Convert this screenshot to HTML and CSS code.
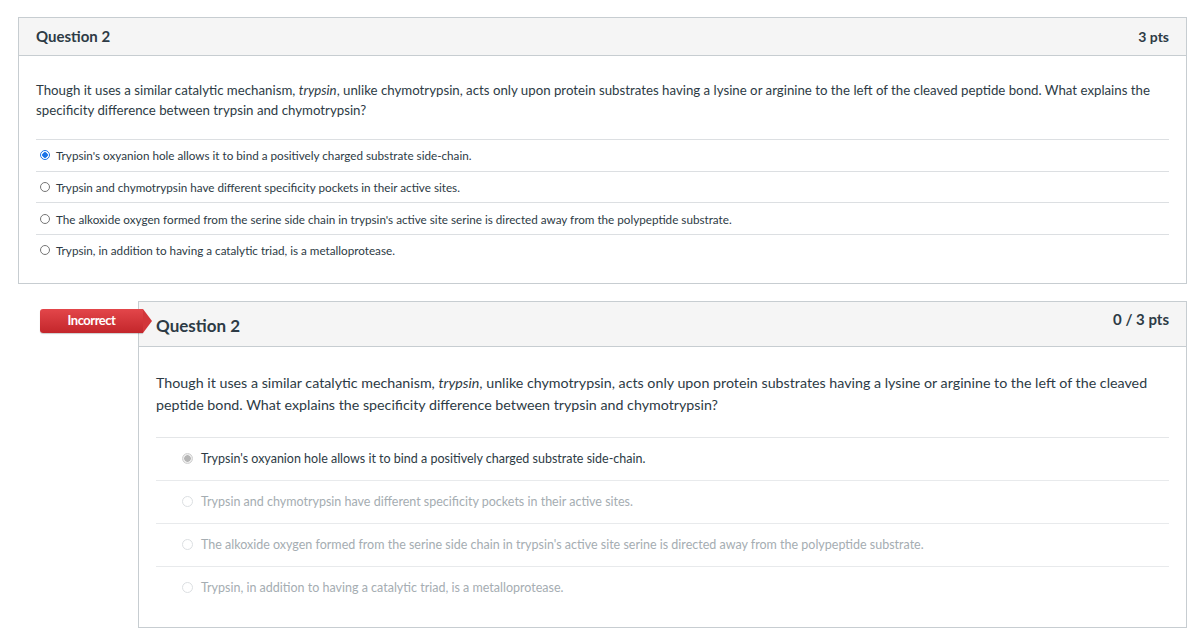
FILE: index.html
```html
<!DOCTYPE html>
<html lang="en">
<head>
    <meta charset="UTF-8">
    <title>Quiz Results</title>
    <link rel="stylesheet" href="styles.css">
</head>
<body>
    <div class="question">
        <div class="question-header">
            <h3>Question 2</h3>
            <span class="points">3 pts</span>
        </div>
        <div class="question-body">
            <p class="question-text">Though it uses a similar catalytic mechanism, <em>trypsin</em>, unlike chymotrypsin, acts only upon protein substrates having a lysine or arginine to the left of the cleaved peptide bond. What explains the specificity difference between trypsin and chymotrypsin?</p>
            <div class="answers">
                <div class="answer"><span class="radio checked"></span>Trypsin's oxyanion hole allows it to bind a positively charged substrate side-chain.</div>
                <div class="answer"><span class="radio"></span>Trypsin and chymotrypsin have different specificity pockets in their active sites.</div>
                <div class="answer"><span class="radio"></span>The alkoxide oxygen formed from the serine side chain in trypsin's active site serine is directed away from the polypeptide substrate.</div>
                <div class="answer"><span class="radio"></span>Trypsin, in addition to having a catalytic triad, is a metalloprotease.</div>
            </div>
        </div>
    </div>

    <div class="result-holder">
        <div class="badge">Incorrect</div>
        <div class="question graded">
            <div class="question-header">
                <h3>Question 2</h3>
                <span class="points">0 / 3 pts</span>
            </div>
            <div class="question-body">
                <p class="question-text">Though it uses a similar catalytic mechanism, <em>trypsin</em>, unlike chymotrypsin, acts only upon protein substrates having a lysine or arginine to the left of the cleaved peptide bond. What explains the specificity difference between trypsin and chymotrypsin?</p>
                <div class="answers">
                    <div class="answer selected"><span class="radio checked"></span>Trypsin's oxyanion hole allows it to bind a positively charged substrate side-chain.</div>
                    <div class="answer"><span class="radio"></span>Trypsin and chymotrypsin have different specificity pockets in their active sites.</div>
                    <div class="answer"><span class="radio"></span>The alkoxide oxygen formed from the serine side chain in trypsin's active site serine is directed away from the polypeptide substrate.</div>
                    <div class="answer"><span class="radio"></span>Trypsin, in addition to having a catalytic triad, is a metalloprotease.</div>
                </div>
            </div>
        </div>
    </div>
</body>
</html>
```

FILE: styles.css
```css
body {
    margin: 0;
    padding: 17px 17px 0 18px;
    background: #fff;
    font-family: Lato, "Open Sans", sans-serif;
    color: #2d3b45;
}

.question {
    border: 1px solid #c7cdd1;
    background: #fff;
}

.question-header {
    display: flex;
    justify-content: space-between;
    align-items: center;
    height: 37px;
    padding: 0 17px;
    background: #f5f5f5;
    border-bottom: 1px solid #c7cdd1;
}

.question-header h3 {
    margin: 0 0 1px 0;
    font-size: 15px;
    font-weight: bold;
}

.points {
    font-size: 14px;
    font-weight: bold;
    margin-bottom: 1px;
}

.question-body {
    padding: 24px 17px 17px 17px;
}

.question-text {
    margin: 0 0 19px 0;
    font-size: 13.25px;
    line-height: 20px;
}

.answers {
    border-top: 1px solid #dcdfe2;
}

.answer {
    display: flex;
    align-items: center;
    height: 30.7px;
    padding-left: 4px;
    font-size: 11.7px;
    border-bottom: 1px solid #dcdfe2;
}

.answer:last-child {
    border-bottom: none;
}

.radio {
    width: 8px;
    height: 8px;
    border: 1px solid #767676;
    border-radius: 50%;
    margin-right: 6px;
    flex-shrink: 0;
    box-sizing: content-box;
}

.radio.checked {
    border-color: #1a73e8;
    background: radial-gradient(circle, #1a73e8 0, #1a73e8 2.5px, #fff 3px);
}

/* graded question */
.result-holder {
    position: relative;
    margin-top: 17px;
    padding-left: 120px;
}

.badge {
    position: absolute;
    left: 22px;
    top: 8px;
    width: 103px;
    height: 24px;
    line-height: 23px;
    text-align: center;
    color: #fff;
    font-size: 13px;
    font-weight: bold;
    letter-spacing: -0.5px;
    background: linear-gradient(#e3464a, #c3262b);
    border-radius: 3px 0 0 3px;
    box-shadow: 0 1px 1px rgba(0, 0, 0, 0.2);
    z-index: 1;
}

.badge::after {
    content: "";
    position: absolute;
    right: -9px;
    top: 0;
    border-top: 12px solid transparent;
    border-bottom: 12px solid transparent;
    border-left: 9px solid #d2363a;
}

.graded .question-header {
    height: 44px;
    align-items: flex-start;
}

.graded .question-header h3 {
    font-size: 17px;
    margin-top: 13px;
}

.graded .points {
    font-size: 15px;
    margin-top: 8px;
}

.graded .question-body {
    padding: 25px 17px 18px 17px;
}

.graded .question-text {
    font-size: 14.25px;
    line-height: 22px;
    margin-bottom: 21px;
}

.graded .answers {
    border-top-color: #e4e6e8;
}

.graded .answer {
    height: 42px;
    padding-left: 26px;
    font-size: 12.5px;
    color: #a5adb2;
    border-bottom-color: #e8eaec;
}

.graded .answer:last-child {
    border-bottom: none;
}

.graded .answer.selected {
    color: #2d3b45;
}

.graded .radio {
    width: 9px;
    height: 9px;
    border-color: #dcdfe2;
    margin-right: 8px;
}

.graded .radio.checked {
    border-color: #d0d0d0;
    background: radial-gradient(circle, #b5b5b5 0, #b5b5b5 3px, #ececec 3.5px);
}
```
